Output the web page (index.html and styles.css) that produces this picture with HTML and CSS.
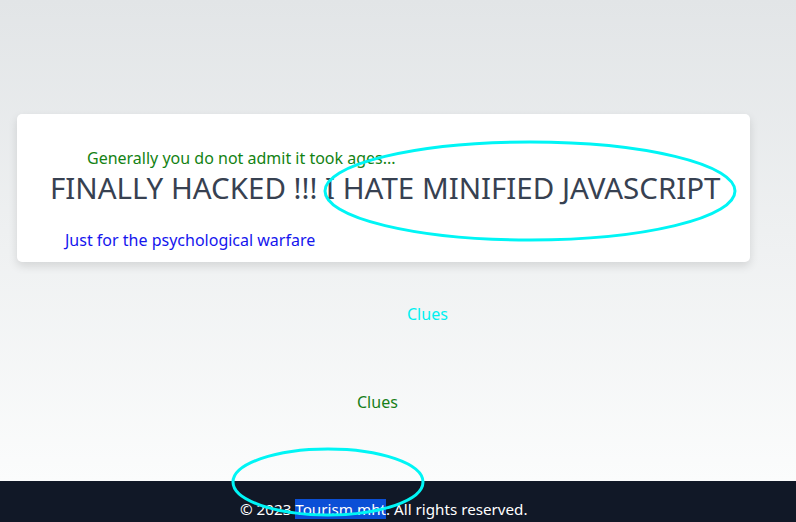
FILE: index.html
```html
<!DOCTYPE html>
<html lang="en">
<head>
<meta charset="utf-8">
<link rel="stylesheet" href="styles.css">
</head>
<body>
<main class="page">
  <section class="card">
    <p class="aside">Generally you do not admit it took ages...</p>
    <h1 class="title">FINALLY HACKED !!! I HATE MINIFIED JAVASCRIPT</h1>
    <p class="note">Just for the psychological warfare</p>
  </section>
  <p class="clue clue-cyan">Clues</p>
  <p class="clue clue-green">Clues</p>
</main>
<footer class="footer">
  <p class="footer-text">© 2023 <span class="hl">Tourism.mht</span>. All rights reserved.</p>
</footer>
<svg class="ring ring-top" width="420" height="106" viewBox="0 0 420 106"><ellipse cx="208" cy="51" rx="205" ry="49" fill="none" stroke="#00f5f5" stroke-width="3"/></svg>
<svg class="ring ring-bottom" width="200" height="72" viewBox="0 0 200 72"><ellipse cx="97" cy="35" rx="95" ry="33" fill="none" stroke="#00f5f5" stroke-width="3"/></svg>
</body>
</html>
```
FILE: styles.css
```css
html, body {
  margin: 0;
  padding: 0;
}
body {
  width: 796px;
  height: 522px;
  overflow: hidden;
  position: relative;
  font-family: "Noto Sans", "DejaVu Sans", sans-serif;
  background: linear-gradient(to bottom, #e2e5e7 0%, #fbfcfc 481px);
}
.page {
  height: 481px;
  padding: 114px 46px 0 17px;
  box-sizing: border-box;
}
.card {
  background: #fff;
  border-radius: 5px;
  box-shadow: 0 4px 10px rgba(0,0,0,0.12);
  height: 148px;
  box-sizing: border-box;
  padding-top: 34px;
}
.aside {
  margin: 0 0 0 70px;
  color: #138213;
  font-size: 16px;
  line-height: 20px;
}
.title {
  margin: 3px 0 0 33px;
  font-weight: 400;
  font-size: 29.5px;
  line-height: 34px;
  color: #374151;
  white-space: nowrap;
}
.note {
  margin: 24px 0 0 48px;
  color: #1515ee;
  font-size: 16px;
  line-height: 22px;
}
.clue {
  margin: 0;
  font-size: 16px;
  line-height: 22px;
}
.clue-cyan {
  color: #00f0f0;
  margin: 41px 0 0 390px;
}
.clue-green {
  color: #17801a;
  margin: 66px 0 0 340px;
}
.footer {
  height: 41px;
  background: #111827;
  box-sizing: border-box;
  padding-top: 16px;
}
.footer-text {
  margin: 0 0 0 240px;
  color: #fff;
  font-size: 15.2px;
  line-height: 24px;
}
.hl {
  background: #0b4fd6;
}
.ring {
  position: absolute;
}
.ring-top {
  left: 322px;
  top: 140px;
}
.ring-bottom {
  left: 231px;
  top: 447px;
}
```
